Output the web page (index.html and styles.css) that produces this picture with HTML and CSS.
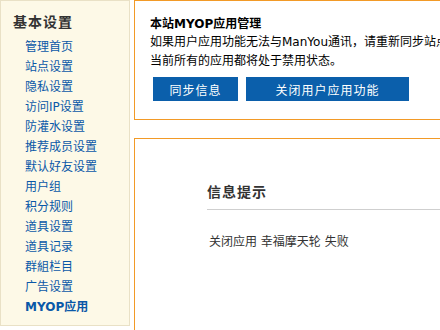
FILE: index.html
```html
<!DOCTYPE html>
<html lang="zh-CN">
<head>
<meta charset="utf-8">
<title>MYOP应用管理</title>
<link rel="stylesheet" href="styles.css">
</head>
<body>
<div class="layout">
  <aside class="side">
    <h3 class="side-title">基本设置</h3>
    <ul class="menu">
      <li><a href="#">管理首页</a></li>
      <li><a href="#">站点设置</a></li>
      <li><a href="#">隐私设置</a></li>
      <li><a href="#">访问IP设置</a></li>
      <li><a href="#">防灌水设置</a></li>
      <li><a href="#">推荐成员设置</a></li>
      <li><a href="#">默认好友设置</a></li>
      <li><a href="#">用户组</a></li>
      <li><a href="#">积分规则</a></li>
      <li><a href="#">道具设置</a></li>
      <li><a href="#">道具记录</a></li>
      <li><a href="#">群組栏目</a></li>
      <li><a href="#">广告设置</a></li>
      <li><a href="#" class="current">MYOP应用</a></li>
    </ul>
  </aside>
  <main class="main">
    <section class="box box-top">
      <h4 class="box-title">本站MYOP应用管理</h4>
      <p class="box-text">如果用户应用功能无法与ManYou通讯，请重新同步站点信息。</p>
      <p class="box-text">当前所有的应用都将处于禁用状态。</p>
      <div class="actions">
        <button class="btn btn-sync">同步信息</button>
        <button class="btn btn-close">关闭用户应用功能</button>
      </div>
    </section>
    <section class="box box-msg">
      <div class="msg">
        <h2 class="msg-title">信息提示</h2>
        <p class="msg-text">关闭应用 幸福摩天轮 失败</p>
      </div>
    </section>
  </main>
</div>
</body>
</html>
```

FILE: styles.css
```css
html, body {
  margin: 0;
  padding: 0;
  overflow: hidden;
  background: #fff;
}
body {
  font-family: "DejaVu Sans", "Noto Sans CJK SC", sans-serif;
  font-size: 12px;
  color: #000;
  width: 440px;
  height: 330px;
}
.layout {
  display: flex;
  align-items: flex-start;
  gap: 4px;
  height: 330px;
  overflow: hidden;
}
.side {
  flex: none;
  width: 128px;
  height: 324px;
  background: #fdf9e7;
  border: 1px solid #e9e1c6;
  padding: 0;
}
.side-title {
  margin: 11px 0 5px 12px;
  font-size: 14px;
  line-height: 20px;
  font-weight: bold;
  color: #333;
  letter-spacing: 1px;
}
.menu {
  list-style: none;
  margin: 0;
  padding: 0 0 0 24px;
}
.menu li {
  line-height: 20px;
  height: 20px;
}
.menu a {
  color: #0a58a8;
  text-decoration: none;
}
.menu a.current {
  font-weight: bold;
}
.main {
  flex: none;
  width: 306px;
  height: 330px;
  overflow: hidden;
  display: flex;
  flex-direction: column;
  gap: 18px;
}
.box {
  flex: none;
  width: 600px;
  box-sizing: border-box;
  border: 1px solid #f29a27;
  background: #fff;
}
.box-top {
  height: 120px;
  padding: 14px 0 0 15px;
  white-space: nowrap;
  overflow: hidden;
}
.box-title {
  margin: 0;
  font-size: 12px;
  line-height: 18px;
  font-weight: bold;
}
.box-text {
  margin: 0;
  line-height: 18.5px;
}
.actions {
  display: flex;
  gap: 8px;
  margin: 7px 0 0 3px;
}
.btn {
  height: 24px;
  border: none;
  background: #0b5fab;
  color: #fff;
  font-family: "Noto Sans CJK SC", sans-serif;
  font-size: 12px;
  letter-spacing: 1px;
  padding: 0;
  cursor: pointer;
}
.btn-sync {
  width: 85px;
}
.btn-close {
  width: 163px;
}
.box-msg {
  height: 192px;
  border-bottom: none;
  padding: 42px 0 0 72px;
}
.msg-title {
  margin: 0;
  padding-bottom: 8px;
  border-bottom: 1px solid #cfcfcf;
  font-family: "Noto Sans CJK SC", sans-serif;
  font-size: 14px;
  line-height: 20px;
  font-weight: bold;
  color: #333;
  letter-spacing: 1px;
}
.msg-text {
  margin: 22px 0 0 2px;
  line-height: 20px;
  color: #333;
}
```
